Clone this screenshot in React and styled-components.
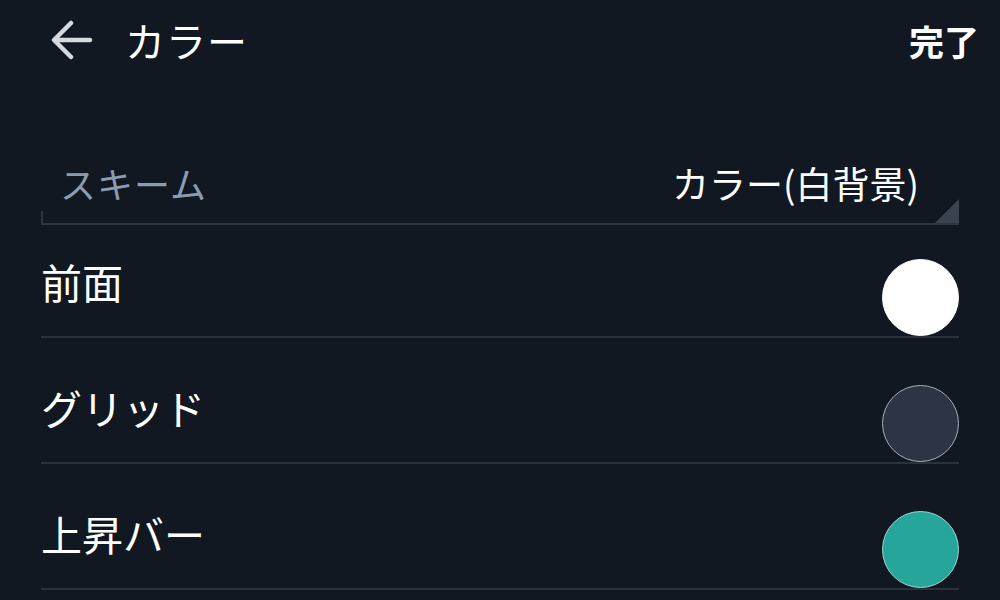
import React from "react";
import styled, { createGlobalStyle } from "styled-components";

const GlobalStyle = createGlobalStyle`
  *, *::before, *::after {
    box-sizing: border-box;
  }
  html, body {
    margin: 0;
    padding: 0;
    background: #111821;
  }
  body {
    font-family: "Noto Sans CJK JP", "Noto Sans", sans-serif;
    color: #f5f6f8;
  }
`;

const colors = [
  { id: "front", label: "前面", fill: "#ffffff", ring: "#ffffff" },
  { id: "grid", label: "グリッド", fill: "#2d3443", ring: "#a9afba" },
  { id: "up", label: "上昇バー", fill: "#26a69a", ring: "#9fd8d1" },
];

function BackArrow() {
  return (
    <svg width="42" height="40" viewBox="0 0 42 40" fill="none">
      <path
        d="M39 20H4M20 3L3 20l17 17"
        stroke="#d6d9de"
        strokeWidth="4.5"
        strokeLinecap="round"
        strokeLinejoin="round"
      />
    </svg>
  );
}

export default function App() {
  return (
    <>
      <GlobalStyle />
      <Page>
        <Header>
          <HeaderLeft>
            <BackButton>
              <BackArrow />
            </BackButton>
            <Title>カラー</Title>
          </HeaderLeft>
          <Done>完了</Done>
        </Header>
        <Content>
          <Select>
            <SelectLabel>スキーム</SelectLabel>
            <SelectValue>カラー(白背景)</SelectValue>
          </Select>
          {colors.map((c) => (
            <Row key={c.id}>
              <RowLabel>{c.label}</RowLabel>
              <Swatch $fill={c.fill} $ring={c.ring} />
            </Row>
          ))}
        </Content>
      </Page>
    </>
  );
}

const Page = styled.div`
  width: 1000px;
  height: 600px;
  overflow: hidden;
  background: #111821;
`;

const Header = styled.div`
  height: 80px;
  display: flex;
  align-items: center;
  justify-content: space-between;
  padding: 0 21px 0 51px;
`;

const HeaderLeft = styled.div`
  display: flex;
  align-items: center;
  gap: 32px;
`;

const BackButton = styled.div`
  display: flex;
  align-items: center;
`;

const Title = styled.div`
  font-size: 40px;
  line-height: 1;
  color: #ffffff;
  letter-spacing: 1px;
`;

const Done = styled.div`
  font-size: 35px;
  font-weight: 700;
  line-height: 1;
  color: #ffffff;
`;

const Content = styled.div`
  padding: 0 41px;
`;

const Select = styled.div`
  position: relative;
  height: 145px;
  display: flex;
  align-items: flex-end;
  justify-content: space-between;
  padding: 0 40px 16px 19px;
  border-bottom: 2px solid #2e3540;

  &::before {
    content: "";
    position: absolute;
    left: 0;
    bottom: 0;
    width: 2px;
    height: 12px;
    background: #2e3540;
  }

  &::after {
    content: "";
    position: absolute;
    right: 0;
    bottom: 0;
    width: 0;
    height: 0;
    border-left: 24px solid transparent;
    border-bottom: 24px solid #3a4250;
  }
`;

const SelectLabel = styled.div`
  font-size: 36px;
  line-height: 48px;
  color: #8b9cb1;
  letter-spacing: 1px;
`;

const SelectValue = styled.div`
  font-size: 37px;
  line-height: 48px;
  color: #ffffff;
`;

const Row = styled.div`
  height: 126px;
  display: flex;
  align-items: flex-end;
  justify-content: space-between;
  border-bottom: 2px solid #2a313b;

  &:nth-of-type(2) {
    height: 113px;
  }
`;

const RowLabel = styled.div`
  font-size: 41px;
  line-height: 48px;
  margin-bottom: 31px;
  color: #ffffff;
`;

const Swatch = styled.div`
  width: 77px;
  height: 77px;
  margin-bottom: 0;
  border-radius: 50%;
  background: ${(p) => p.$fill};
  border: 1.5px solid ${(p) => p.$ring};
`;
